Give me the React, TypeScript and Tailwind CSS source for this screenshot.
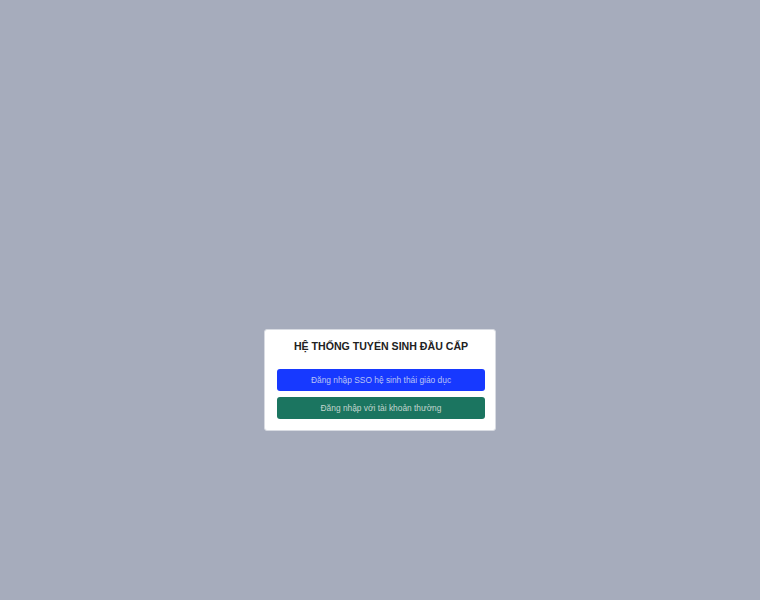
export default function App() {
  return (
    <div
      className="min-h-screen w-full bg-[#a6acbc] flex justify-center pt-[329px]"
      style={{ fontFamily: '"Liberation Sans", Arial, sans-serif' }}
    >
      <div className="w-[232px] h-[102px] bg-white rounded-[3px] border border-[#d8dbe2] pl-[12px] pr-[10px] pt-[9px] flex flex-col">
        <h1 className="text-center text-[10.6px] font-bold text-[#222] leading-[14px]">
          HỆ THỐNG TUYỂN SINH ĐẦU CẤP
        </h1>
        <div className="mt-[16px] flex flex-col gap-[6px]">
          <button className="h-[22px] w-full rounded-[3px] bg-[#1739ff] text-[8.4px] text-[#b9c4f5]">
            Đăng nhập SSO hệ sinh thái giáo dục
          </button>
          <button className="h-[22px] w-full rounded-[3px] bg-[#1b7560] text-[8.4px] text-[#c3d6cf]">
            Đăng nhập với tài khoản thường
          </button>
        </div>
      </div>
    </div>
  );
}
